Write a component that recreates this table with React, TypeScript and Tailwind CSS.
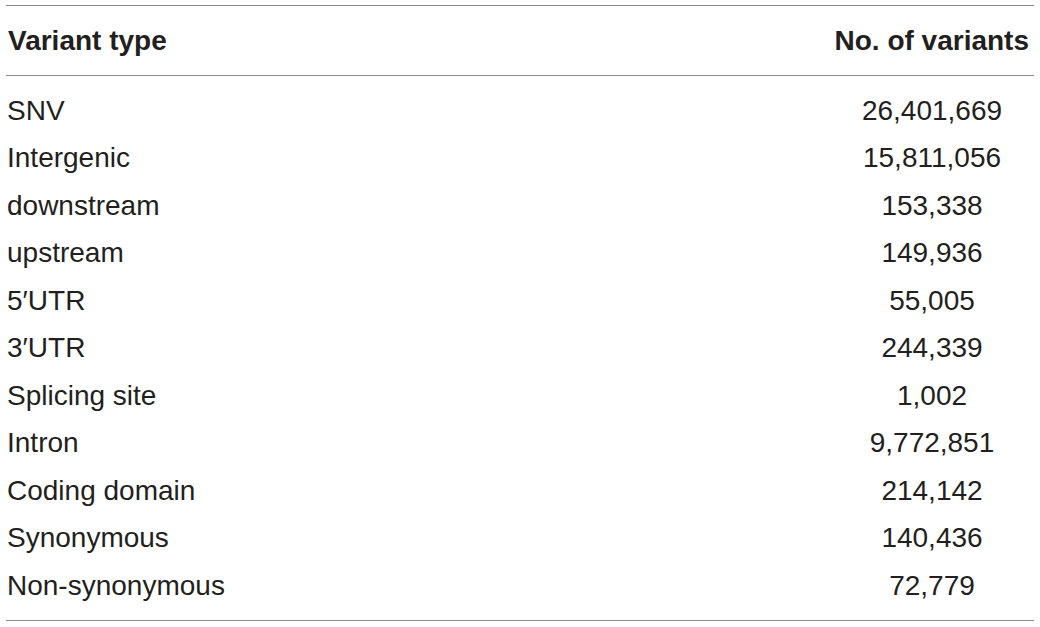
const rows: [string, string][] = [
  ['SNV', '26,401,669'],
  ['Intergenic', '15,811,056'],
  ['downstream', '153,338'],
  ['upstream', '149,936'],
  ['5\u2032UTR', '55,005'],
  ['3\u2032UTR', '244,339'],
  ['Splicing site', '1,002'],
  ['Intron', '9,772,851'],
  ['Coding domain', '214,142'],
  ['Synonymous', '140,436'],
  ['Non-synonymous', '72,779'],
]

function App() {
  return (
    <div className="min-h-screen bg-white pt-[5px] font-['Liberation_Sans',Arial,sans-serif] text-[28px] text-[#231f20]">
      <div className="ml-[6px] w-[1028px] border-y border-[#8c8c8c]">
        {/* Header */}
        <div className="grid grid-cols-[1fr_auto] items-center h-[70px] border-b border-[#8c8c8c] pl-[2px] pr-[5px] font-bold">
          <span>Variant type</span>
          <span>No. of variants</span>
        </div>

        {/* Body */}
        <div className="grid grid-cols-[1fr_auto] pt-[11px] pb-[10px] pl-[1px] pr-[5px]">
          {rows.map(([name, count]) => (
            <div key={name} className="contents">
              <span className="h-[47.5px] flex items-center">{name}</span>
              <span className="h-[47.5px] flex items-center justify-center w-[194px]">{count}</span>
            </div>
          ))}
        </div>
      </div>
    </div>
  )
}

export default App
